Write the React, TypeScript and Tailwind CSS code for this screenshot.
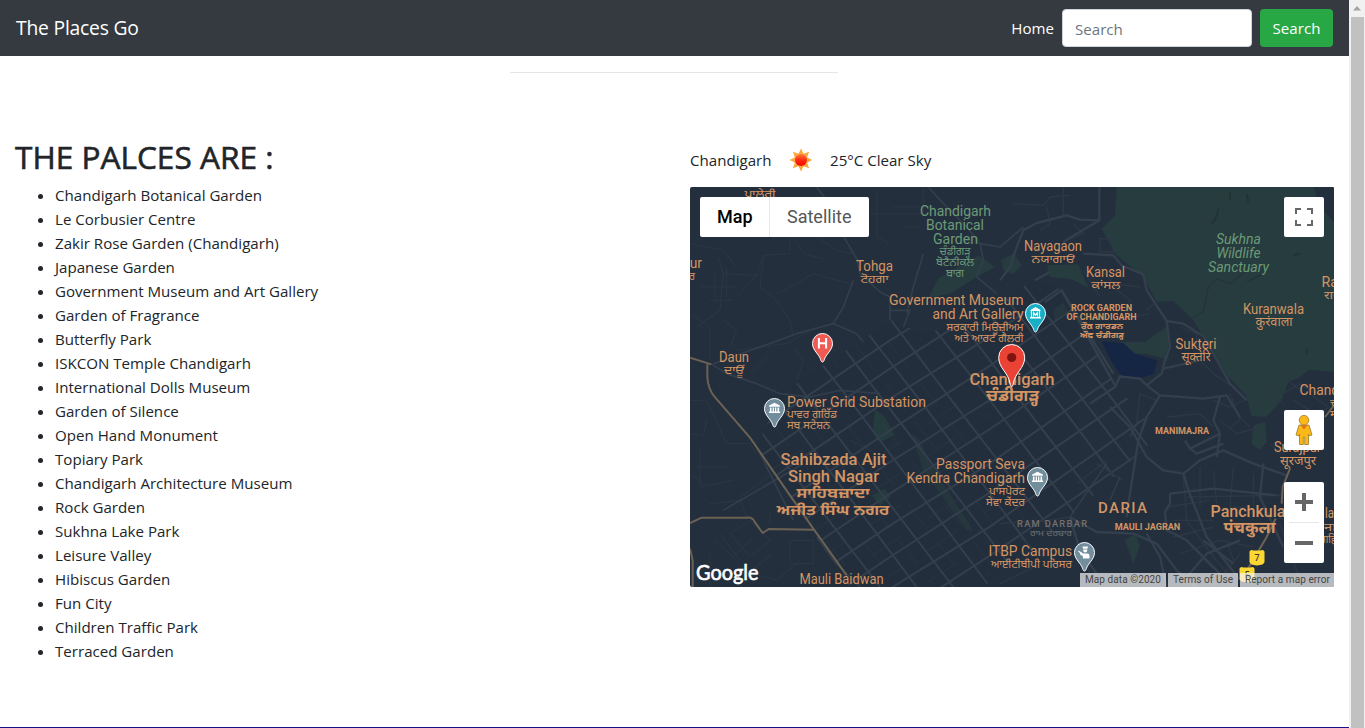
import React from "react";

const places = [
  "Chandigarh Botanical Garden",
  "Le Corbusier Centre",
  "Zakir Rose Garden (Chandigarh)",
  "Japanese Garden",
  "Government Museum and Art Gallery",
  "Garden of Fragrance",
  "Butterfly Park",
  "ISKCON Temple Chandigarh",
  "International Dolls Museum",
  "Garden of Silence",
  "Open Hand Monument",
  "Topiary Park",
  "Chandigarh Architecture Museum",
  "Rock Garden",
  "Sukhna Lake Park",
  "Leisure Valley",
  "Hibiscus Garden",
  "Fun City",
  "Children Traffic Park",
  "Terraced Garden",
];

const INDIC = "'Noto Sans', 'Noto Sans Gurmukhi', 'Noto Sans Devanagari', sans-serif";
const LATIN = "Roboto, sans-serif";
const ORANGE = "#d59563";
const GREEN = "#6b9a76";
const GREY = "#75706c";

type Anchor = "start" | "middle" | "end";
type Label = {
  t: string;
  x: number;
  y: number;
  w: number;
  s?: number;
  a?: Anchor;
  b?: number;
  c?: string;
  indic?: boolean;
  i?: boolean;
};

const labels: Label[] = [
  { t: "Chandigarh", x: 265.5, y: 29, w: 71, c: GREEN },
  { t: "Botanical", x: 265, y: 43, w: 58, c: GREEN },
  { t: "Garden", x: 265.5, y: 57, w: 45, c: GREEN },
  { t: "ਚੰਡੀਗੜ੍ਹ", x: 265, y: 68, w: 31, s: 11, c: GREEN, indic: true },
  { t: "ਬੋਟੈਨੀਕਲ", x: 265, y: 79, w: 38, s: 11, c: GREEN, indic: true },
  { t: "ਬਾਗ", x: 265, y: 90, w: 18, s: 11, c: GREEN, indic: true },
  { t: "ਪਾਲੇਰੀ", x: 70, y: 11, w: 31, s: 11, indic: true },
  { t: "pur", x: 12, y: 81, w: 20, a: "end" },
  { t: "ਰ", x: 5, y: 93, w: 6, s: 11, a: "end", indic: true },
  { t: "Tohga", x: 184.5, y: 84, w: 37 },
  { t: "ਟੋਹਗਾ", x: 184.5, y: 96, w: 28, s: 11, indic: true },
  { t: "Government Museum", x: 333.5, y: 118, w: 134.5, a: "end" },
  { t: "and Art Gallery", x: 333.5, y: 132, w: 91, a: "end" },
  { t: "ਸਰਕਾਰੀ ਮਿਊਜ਼ੀਅਮ", x: 333.5, y: 143.5, w: 77, s: 11, a: "end", indic: true },
  { t: "ਅਤੇ ਆਰਟ ਗੈਲਰੀ", x: 333.5, y: 154.5, w: 69, s: 11, a: "end", indic: true },
  { t: "Daun", x: 44, y: 174.5, w: 30 },
  { t: "ਦਾਊਂ", x: 44, y: 187, w: 20, s: 11, indic: true },
  { t: "Power Grid Substation", x: 97, y: 219.5, w: 139, a: "start" },
  { t: "ਪਾਵਰ ਗਰਿੱਡ", x: 97, y: 230.5, w: 50, s: 11, a: "start", indic: true },
  { t: "ਸਬ ਸਟੇਸ਼ਨ", x: 97, y: 241.5, w: 43, s: 11, a: "start", indic: true },
  { t: "Sahibzada Ajit", x: 143.5, y: 278, w: 106, s: 17, b: 500 },
  { t: "Singh Nagar", x: 143.5, y: 295, w: 91, s: 17, b: 500 },
  { t: "ਸਾਹਿਬਜ਼ਾਦਾ", x: 143, y: 311, w: 73, s: 15, b: 700, indic: true },
  { t: "ਅਜੀਤ ਸਿੰਘ ਨਗਰ", x: 143, y: 328, w: 113, s: 15, b: 700, indic: true },
  { t: "Mauli Baidwan", x: 151.5, y: 397, w: 84 },
  { t: "Passport Seva", x: 335, y: 282, w: 89, a: "end" },
  { t: "Kendra Chandigarh", x: 335, y: 296, w: 118.5, a: "end" },
  { t: "ਪਾਸਪੋਰਟ", x: 335, y: 307.5, w: 36, s: 11, a: "end", indic: true },
  { t: "ਸੇਵਾ ਕੇਂਦਰ", x: 335, y: 318.5, w: 39, s: 11, a: "end", indic: true },
  { t: "Chandigarh", x: 322, y: 198, w: 85, s: 17, b: 500 },
  { t: "ਚੰਡੀਗੜ੍ਹ", x: 322.5, y: 214, w: 53, s: 16, b: 700, indic: true },
  { t: "Nayagaon", x: 363, y: 64, w: 58 },
  { t: "ਨਯਾਗਾਓਂ", x: 363, y: 76, w: 43, s: 11, indic: true },
  { t: "Kansal", x: 415.5, y: 90, w: 39 },
  { t: "ਕਾਂਸਲ", x: 416, y: 102, w: 29, s: 11, indic: true },
  { t: "ROCK GARDEN", x: 411.5, y: 124.3, w: 61, s: 9.3, b: 700 },
  { t: "OF CHANDIGARH", x: 411.5, y: 133.3, w: 70, s: 9.3, b: 700 },
  { t: "ਰੌਕ ਗਾਰਡਨ", x: 412, y: 142.3, w: 42, s: 8.5, b: 700, indic: true },
  { t: "ਔਫ ਚੰਡੀਗੜ੍ਹ", x: 412, y: 151.3, w: 44, s: 8.5, b: 700, indic: true },
  { t: "Sukhna", x: 548.5, y: 57, w: 45, c: GREEN, i: true },
  { t: "Wildlife", x: 548.5, y: 71, w: 44, c: GREEN, i: true },
  { t: "Sanctuary", x: 548.5, y: 85, w: 61, c: GREEN, i: true },
  { t: "Rat", x: 631.5, y: 99.5, w: 21, a: "start" },
  { t: "राय", x: 634, y: 111.5, w: 17, s: 11, a: "start", indic: true },
  { t: "Kuranwala", x: 583.5, y: 127, w: 61 },
  { t: "कुरंवाला", x: 584, y: 139, w: 37, s: 12, indic: true },
  { t: "Sukteri", x: 506, y: 161.5, w: 41 },
  { t: "सूक्तेरि", x: 506, y: 174, w: 29, s: 12, indic: true },
  { t: "Chandi", x: 609.5, y: 208, w: 43, a: "start" },
  { t: "चं", x: 640, y: 220, w: 8, s: 11, a: "start", indic: true },
  { t: "मं", x: 640, y: 231, w: 8, s: 11, a: "start", indic: true },
  { t: "MANIMAJRA", x: 492, y: 247.3, w: 54, s: 9.3, b: 700 },
  { t: "Surajpur", x: 607.5, y: 265, w: 47 },
  { t: "सूरजपुर", x: 608, y: 277.5, w: 36, s: 12, indic: true },
  { t: "Panchkula", x: 520.5, y: 329.5, w: 75, s: 17, b: 500, a: "start" },
  { t: "पंचकुला", x: 559.5, y: 346, w: 52, s: 16.5, b: 700, indic: true },
  { t: "la", x: 635, y: 331, w: 9, a: "start" },
  { t: "ना", x: 634, y: 344, w: 12, s: 11, a: "start", indic: true },
  { t: "साहि", x: 629, y: 356, w: 17, s: 11, a: "start", indic: true },
  { t: "MAULI JAGRAN", x: 457.5, y: 343, w: 65.5, s: 9.3, b: 700 },
  { t: "ਰਾਮ ਦਰਬਾਰ", x: 361, y: 348.5, w: 42, s: 8.5, c: GREY, indic: true },
  { t: "ITBP Campus", x: 382, y: 369, w: 83.5, a: "end" },
  { t: "ਆਈਟੀਬੀਪੀ ਪਰਿਸਰ", x: 382, y: 380.5, w: 81, s: 11, a: "end", indic: true },
];

const Text = ({ l }: { l: Label }) => (
  <text
    x={l.x}
    y={l.y}
    textAnchor={l.a ?? "middle"}
    textLength={l.w}
    lengthAdjust="spacingAndGlyphs"
    fontSize={l.s ?? 14.2}
    fontWeight={l.b ?? 400}
    fontStyle={l.i ? "italic" : "normal"}
    fontFamily={l.indic ? INDIC : LATIN}
    fill={l.c ?? ORANGE}
  >
    {l.t}
  </text>
);

const Pin = ({ x, y, fill, children }: { x: number; y: number; fill: string; children: React.ReactNode }) => (
  <g transform={`translate(${x} ${y})`}>
    <path
      d="M0 28.5C-.9 28.5-1.4 27.6-1.8 26.2C-3.4 20.6-10 16.8-10 10A10 10 0 0 1 10 10C10 16.8 3.4 20.6 1.8 26.2C1.4 27.6 .9 28.5 0 28.5Z"
      fill={fill}
      stroke="#fff"
      strokeWidth="1"
    />
    {children}
  </g>
);

const Museum = () => (
  <g fill="#fff">
    <path d="M0 4.2L5.4 7V8.2H-5.4V7Z" />
    <path d="M-4.6 9H-3V13H-4.6ZM-1.8 9H-.5V13H-1.8ZM.5 9H1.8V13H.5ZM3 9H4.6V13H3ZM-5.6 13H5.6V14.6H-5.6Z" />
  </g>
);

const MapDrawing = () => {
  const rising = [445, 530, 615, 705, 800, 895, 990, 1085, 1180, 1275, 1370, 1465, 1560, 1655];
  const falling = [-420, -310, -200, -90, 20, 120, 225, 330, 430, 530, 620, 700];
  return (
    <svg width="644" height="400" viewBox="0 0 644 400" className="block">
      <defs>
        <clipPath id="sectors">
          <path d="M270 622L605 400L700 440L850 400L1035 275L1115 310L1275 590L1405 745L1140 990L880 1200H480L360 1010L200 780Z" />
        </clipPath>
      </defs>
      <rect width="644" height="400" fill="#242f3e" />

      <g transform="scale(.33333)" fill="none">
        <g fill="#263c3f">
          <path d="M745 275L865 205L915 240L860 270L780 320L715 332Z" />
          <path d="M555 665L585 690L615 745L575 762L548 735Z" />
          <path d="M545 925L585 905L602 930L570 958Z" />
          <path d="M665 740L690 760L720 830L850 1030L830 1030L700 850Z" opacity=".7" />
          <path d="M935 225L975 205L995 235L970 262L940 250Z" />
        </g>
        <g stroke="#2c3644" strokeWidth="3">
          <path d="M85 210L100 260L90 370L20 420M100 260L200 265L220 205L300 200L300 75M200 265L140 330M30 300H140M60 340H130M75 250V340M110 245V330M0 380L60 420V520M220 205L210 300L260 340L300 400L310 450" />
          <path d="M265 320L370 260L480 290M380 150L440 190L490 200M300 130L340 200L400 215M560 10V150L600 170M540 80H700V0M610 60H740M640 120H690M0 170L100 190L140 240" />
          <path d="M0 640H50L110 770H180L200 800M0 740L40 745L50 700M20 840H120M30 780V900L130 880M60 950L150 940L170 990M0 860L40 890M60 1100V1200M90 1040L150 1120M240 970V1010M300 1060H370V1130H300ZM120 1040L180 1000L240 1060L180 1110Z" />
          <path d="M75 1060L130 1110L190 1050M110 1090L170 1160L250 1100M190 1160L260 1180L330 1120M230 860L330 790L400 830M150 930L250 860M380 880L480 830L540 870M480 760L560 800" />
          <path d="M380 420L290 470L140 490M310 480L340 520L320 580M240 500L180 560M100 400L140 430L120 480" />
        </g>
        <g stroke="#333e4c" strokeWidth="5" strokeLinejoin="round">
          <path d="M62 530L110 560L200 590L270 620L360 630L450 610L570 620" />
          <path d="M380 0L410 40L450 130L500 215L510 260L570 315L600 330M490 280L460 360L430 410L320 440L210 480L70 530M430 410L500 440L520 465" />
          <path d="M715 0L760 50L830 120L870 170L880 220L860 270L920 320M700 200L670 300L650 380M600 370H660L640 420M600 330V400M870 170L930 180L1000 120" />
          <path d="M510 1200L430 1120L380 1050M200 780L310 1000M100 970L340 830" />
        </g>
        <g clipPath="url(#sectors)" stroke="#343f4d" strokeWidth="6">
          {rising.map((y, n) => (
            <path key={y} d={`M200 ${y + 200}L600 ${y - 70}L900 ${y - 264 + (n % 2) * 8}L1450 ${y - 640}`} />
          ))}
          {falling.map((x, n) => (
            <path key={x} d={`M${x + 250} 230L${x + 560 + (n % 2) * 10} 640L${x + 990} 1200`} />
          ))}
          <g strokeWidth="3" opacity=".35">
            {falling.slice(0, 7).map((x) => (
              <path key={x} d={`M${x + 190} 230L${x + 505} 640L${x + 935} 1200`} strokeDasharray="90 60" />
            ))}
            {rising.slice(4).map((y) => (
              <path key={y} d={`M200 ${y + 250}L900 ${y - 213}`} strokeDasharray="110 95" />
            ))}
          </g>
        </g>
        <g stroke="#6c6254" strokeWidth="6" strokeLinejoin="round">
          <path d="M0 512L64 532M52 532V570Q54 608 76 632L180 752L300 925L372 1028L470 1165" />
          <path d="M0 1008L35 992H172Q187 990 195 1006L218 1038L236 1026L372 1028M0 1085L8 1120V1200" />
        </g>
      </g>

      <g transform="translate(310 0) scale(.33333)" fill="none">
        <path d="M350 0H1002V555L930 548L895 572L865 585L845 640L800 690L755 688L738 625L685 570L645 500L610 450L580 400L520 342L470 345L430 270L350 205L305 125L345 85Z" fill="#263c3f" />
        <path d="M942 0H1002V105Q955 65 942 0Z" fill="#242f3e" />
        <g fill="#263c3f">
          <path d="M760 715L795 705L800 765L780 788L755 772Z" />
          <path d="M360 465L435 465L505 415V518L440 500L380 500Z" />
          <path d="M140 235L235 232L265 302L210 275L150 270Z" />
          <path d="M160 370L190 345L205 375L165 400Z" opacity=".6" />
          <path d="M375 1060L405 1040L420 1075L400 1130Z" />
          <path d="M0 220L40 200L60 230L35 262Z" />
        </g>
        <path d="M305 462L370 468L405 500L472 520L462 560L425 572L365 566L335 525Z" fill="#152544" />
        <path d="M735 255L690 290L650 275L625 300L610 375L570 395M790 260L740 285" stroke="#203236" strokeWidth="3" />
        <path d="M655 65Q650 95 635 110M690 15V40M920 485V500M740 20L745 45M900 200L880 205" stroke="#203434" strokeWidth="6" />
        <g stroke="#2d3745" strokeWidth="4">
          <path d="M40 50L130 55L150 30L210 25M140 60L150 110L120 130M190 0V90M220 110L250 140L200 160M300 155H340V195H300ZM290 230L340 290L420 300M250 250L300 330M340 300L390 340L380 390" />
          <path d="M350 400L450 380M460 350L440 370M540 420L590 440V480M690 620L720 700L690 720M640 640L690 660L730 640M660 700L710 740L780 720M720 690L750 720M600 520L640 560L700 600" />
          <path d="M850 620L900 590L950 620M880 640L930 670M840 560L900 610M930 620L985 660L950 690M800 590L850 650M810 770L840 800L870 790" />
          <path d="M550 870L560 1000L640 1110L700 1180M600 840V960M640 850L650 950M700 840L690 960L740 960M760 860V960M560 930L850 925M520 1000H640M500 960L630 940M520 1050L640 1020M540 1100L660 1060L760 1080M600 1110L660 1160M640 1200L720 1100M680 1060L700 1120" />
          <path d="M230 890L320 820M80 1010L210 990M60 1050L130 1110M250 1090L280 1200M0 1190L120 1130M290 830L370 880M840 1010L900 1180M470 640L420 620L410 700M500 690L600 680L640 720M0 1010L100 1000" />
        </g>
        <g stroke="#343f4d" strokeWidth="7" strokeLinejoin="round">
          <path d="M298 0V100L240 98L200 85L110 108L70 130L50 180L30 240L0 280M298 100L230 140L190 165M250 200L340 205L365 235L430 262L440 310L500 402L550 410L610 448L640 500L690 590L740 640" />
          <path d="M500 402L510 480L495 520L485 560L440 595L420 575L360 568L345 600L270 650" />
          <path d="M480 625L610 635L680 625L720 690M480 625L440 690L415 760L390 920L380 990M440 595L480 625M600 520L490 545" />
          <path d="M330 660L390 720L440 810L490 850L550 860L600 820L670 790L760 830L860 865M660 630L640 700L660 740L570 785L555 760M660 740L650 810M570 785L590 800L670 770" />
          <path d="M550 860L565 910L620 1050L720 1180M510 920L640 905L830 925M510 920V950L495 975L500 1030L560 1060L680 1180M790 830L780 930L850 1080" />
          <path d="M210 990L290 1035L400 1040L470 1070L530 1150L590 1200M210 990L240 1090L290 1160M440 1040L480 1110L500 1200M610 1060L700 1130" />
          <path d="M105 280L150 255M185 310L345 595M135 345L185 310L340 560M560 1170L620 1100L720 1060" />
          <path d="M390 750L415 700M360 870L330 940M210 990L320 830" strokeWidth="4" />
        </g>
        <path d="M870 845L848 900L845 950M827 995L800 1050L735 1160M1002 655L975 690" stroke="#6c6254" strokeWidth="6" />
      </g>

      {labels.map((l) => (
        <Text key={`${l.t}-${l.x}-${l.y}`} l={l} />
      ))}
      <text x="408" y="325.5" fontSize="15" fontWeight="500" fontFamily={LATIN} fill={ORANGE} textLength="49" lengthAdjust="spacing">
        DARIA
      </text>
      <text x="327" y="340" fontSize="9.3" fontWeight="500" fontFamily={LATIN} fill={GREY} textLength="70" lengthAdjust="spacing">
        RAM DARBAR
      </text>

      <g fontFamily={LATIN} fontSize="9" fontWeight="500" textAnchor="middle">
        <path d="M559.5 364.5L561 363Q567 364 573 363L574.5 364.5V375Q574 378 567 378.5Q560 378 559.5 375Z" fill="#fdd835" />
        <text x="567" y="374" fill="#3c3c20">7</text>
        <path d="M549.5 381.5L551 380Q557 381 563 380L564.5 381.5V392Q564 395 557 395.5Q550 395 549.5 392Z" fill="#fdd835" />
        <text x="557" y="391" fill="#3c3c20">5</text>
      </g>

      <Pin x={132.5} y={146.5} fill="#ef5b53">
        <path d="M-3.6 4.5V15M3.6 4.5V15M-3.6 9.8H3.6" stroke="#fff" strokeWidth="2" />
      </Pin>
      <Pin x={84.5} y={211.5} fill="#728d9b">
        <Museum />
      </Pin>
      <Pin x={347.5} y={280.5} fill="#728d9b">
        <Museum />
      </Pin>
      <Pin x={345.5} y={116.5} fill="#16afc6">
        <path d="M0 3.6L5 6.4V7.4H-5V6.4ZM-5.4 13.4H5.4V15H-5.4Z" fill="#fff" />
        <path d="M-4 7.5V13.5M4 7.5V13.5" stroke="#fff" strokeWidth="1.2" />
        <path d="M-1.9 13V9.2L0 11.6L1.9 9.2V13" stroke="#fff" strokeWidth="1.1" fill="none" />
      </Pin>
      <Pin x={394.5} y={355.5} fill="#728d9b">
        <path d="M-2 4H3.5L3 6.2H-1.5ZM-1.3 7H2.7V8.2Q2.5 10 .7 10Q-1 10-1.3 8.2ZM-6 8L-1 11H2.5Q5 11 5 13V16H-1.6V13.4L-4 12.4L-4.6 10.4L-6.2 9.2Z" fill="#fff" />
      </Pin>

      <g transform="translate(321.7 157.5)">
        <path
          d="M0 42C-1 42-1.3 40.5-1.6 38.8C-3.5 28-13 23.5-13 13A13 13 0 0 1 13 13C13 23.5 3.5 28 1.6 38.8C1.3 40.5 1 42 0 42Z"
          fill="#ea4335"
          stroke="#fff"
          strokeWidth="1"
        />
        <circle cx="0" cy="13" r="4.6" fill="#811411" />
      </g>

      <text x="6" y="392.5" fontFamily="Lato, sans-serif" fontSize="21" fill="#fff" stroke="#fff" strokeWidth=".6" textLength="62.5" lengthAdjust="spacingAndGlyphs">
        Google
      </text>
    </svg>
  );
};

const Sun = () => (
  <svg width="24" height="24" viewBox="-12 -12 24 24">
    <defs>
      <linearGradient id="sun" x1="0" y1="0" x2="0" y2="1">
        <stop offset="0" stopColor="#ff7a3c" />
        <stop offset=".5" stopColor="#ff2a10" />
        <stop offset="1" stopColor="#f50500" />
      </linearGradient>
    </defs>
    {[0, 45, 90, 135, 180, 225, 270, 315].map((r) => (
      <path key={r} d="M0 -11.5L3 -5H-3Z" fill="#f9a73a" transform={`rotate(${r})`} />
    ))}
    <circle r="7" fill="#fbb040" />
    <circle r="6" fill="url(#sun)" />
  </svg>
);

export default function App() {
  return (
    <div className="flex h-[728px] w-[1365px] overflow-hidden bg-white font-['Open_Sans',sans-serif] text-[15.1px] leading-6 text-[#212529]">
      <div className="flex h-full w-[1349px] flex-col border-b border-[#1a0f8a]">
        <nav className="flex h-14 shrink-0 items-center bg-[#343a40] px-4 text-white">
          <span className="text-[19.3px] leading-[30px] tracking-[-0.2px]">The Places Go</span>
          <div className="ml-auto flex items-center gap-2">
            <span>Home</span>
            <input
              className="h-[38px] w-[190px] rounded-[4px] border border-[#ced4da] bg-white px-3 pt-0.5 text-[#495057] outline-none placeholder:text-[#6c757d]"
              placeholder="Search"
            />
            <button className="h-[38px] w-[73px] rounded-[4px] bg-[#28a745] text-center">Search</button>
          </div>
        </nav>
        <hr className="ml-[510px] mt-4 w-[328px] shrink-0 border-[#e5e5e5]" />
        <main className="grid grid-cols-[675px_674px]">
          <section className="pl-[15px] pt-[65px]">
            <h2 className="mb-[7px] whitespace-nowrap text-[31.6px] font-medium leading-[38px] [-webkit-text-stroke:0.6px_#212529]">THE PALCES ARE :</h2>
            <ul className="list-disc pl-10">
              {places.map((p) => (
                <li key={p}>{p}</li>
              ))}
            </ul>
          </section>
          <section className="pl-[15px] pt-[72px]">
            <div className="flex h-[30px] items-center">
              <span className="w-[99px]">Chandigarh</span>
              <Sun />
              <span className="ml-[17px]">25°C Clear Sky</span>
            </div>
            <div className="relative mt-[12px] h-[400px] w-[644px] overflow-hidden rounded-[2px] font-[Roboto,sans-serif]">
              <MapDrawing />
              <div className="absolute left-[10px] top-[10px] flex h-10 rounded-[2px] bg-white text-[18px] leading-10">
                <span className="w-[70px] border-r border-[#e6e6e6] pl-[17px] font-medium text-black">Map</span>
                <span className="w-[99px] pl-[17px] text-[#565656]">Satellite</span>
              </div>
              <div className="absolute right-[10px] top-[10px] flex size-10 items-center justify-center rounded-[2px] bg-white">
                <svg width="18" height="18" viewBox="0 0 18 18" fill="none" stroke="#666" strokeWidth="2">
                  <path d="M1 6V1H6M12 1H17V6M17 12V17H12M6 17H1V12" />
                </svg>
              </div>
              <div className="absolute right-[10px] top-[223px] flex size-10 items-center justify-center rounded-[2px] bg-white">
                <svg width="18" height="30" viewBox="0 0 18 30">
                  <path d="M4 10H14L17 20L14.5 21L13.5 19V29.5H9.7V22H8.3V29.5H4.5V19L3.5 21L1 20Z" fill="#fbb917" stroke="#9b7b2c" strokeWidth=".8" />
                  <circle cx="9" cy="5.2" r="4.8" fill="#fbb917" stroke="#9b7b2c" strokeWidth=".8" />
                  <path d="M5.4 10H12.6L9 14.5Z" fill="#e0731d" />
                </svg>
              </div>
              <div className="absolute right-[10px] top-[295px] flex h-[81px] w-10 flex-col items-center rounded-[2px] bg-white">
                <svg width="18" height="40" viewBox="0 0 18 40" stroke="#666" strokeWidth="4">
                  <path d="M0 20H18M9 11V29" />
                </svg>
                <div className="h-px w-[30px] bg-[#e6e6e6]" />
                <svg width="18" height="40" viewBox="0 0 18 40" stroke="#666" strokeWidth="4">
                  <path d="M0 20H18" />
                </svg>
              </div>
              <div className="absolute bottom-0 right-0 flex h-[14px] gap-[2px] whitespace-nowrap text-[10px] leading-[14px] text-[#444]">
                <span className="w-[86px] bg-[#f5f5f5]/70 pl-[5px] tracking-[0.08px]">Map data ©2020</span>
                <span className="w-[70px] bg-[#f5f5f5]/70 pl-[5px] tracking-[0.08px]">Terms of Use</span>
                <span className="w-[94px] bg-[#f5f5f5]/70 pl-[5px] tracking-[0.08px]">Report a map error</span>
              </div>
            </div>
          </section>
        </main>
      </div>
      <div className="flex h-full w-4 flex-col items-center bg-[#f1f1f1]">
        <div className="flex h-[17px] items-center justify-center">
          <svg width="8" height="5" viewBox="0 0 8 5">
            <path d="M4 0L8 4.5H0Z" fill="#a3a3a3" />
          </svg>
        </div>
        <div className="w-[13px] flex-1 bg-[#c1c1c1]" />
      </div>
    </div>
  );
}
